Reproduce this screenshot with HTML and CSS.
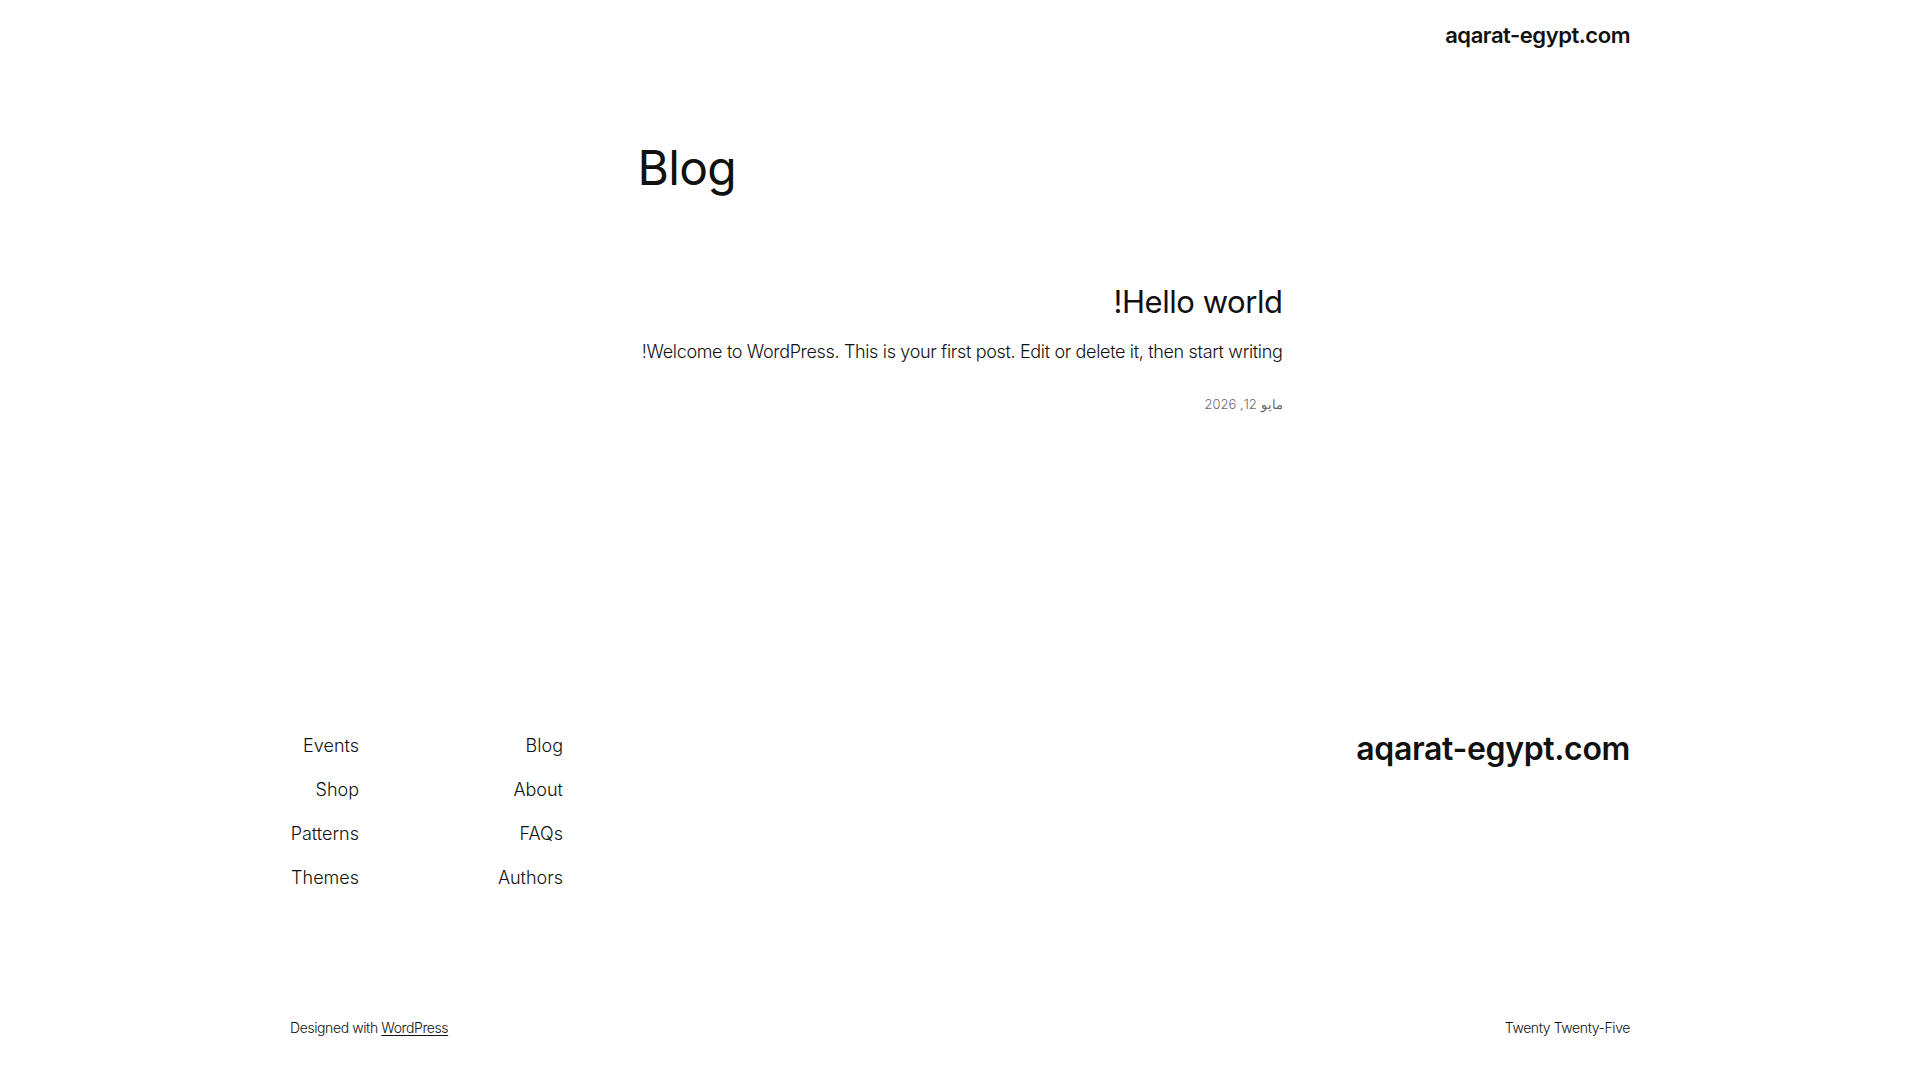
FILE: index.html
```html
<!DOCTYPE html>
<html lang="ar" dir="rtl">
<head>
<meta charset="utf-8">
<title>Blog – aqarat-egypt.com</title>
<link rel="stylesheet" href="styles.css">
</head>
<body>
<header class="site-header">
  <div class="wide">
    <a class="site-title" href="#">aqarat-egypt.com</a>
  </div>
</header>
<main class="content">
  <h1 class="page-title">Blog</h1>
  <article class="post">
    <h2 class="post-title"><a href="#">Hello world!</a></h2>
    <p class="excerpt">Welcome to WordPress. This is your first post. Edit or delete it, then start writing!</p>
    <div class="post-date">مايو 12, 2026</div>
  </article>
</main>
<footer class="site-footer">
  <div class="wide footer-top">
    <a class="footer-title" href="#">aqarat-egypt.com</a>
    <nav class="footer-nav">
      <ul class="nav-col col-1">
        <li><a href="#">Blog</a></li>
        <li><a href="#">About</a></li>
        <li><a href="#">FAQs</a></li>
        <li><a href="#">Authors</a></li>
      </ul>
      <ul class="nav-col col-2">
        <li><a href="#">Events</a></li>
        <li><a href="#">Shop</a></li>
        <li><a href="#">Patterns</a></li>
        <li><a href="#">Themes</a></li>
      </ul>
    </nav>
  </div>
  <div class="wide footer-bottom">
    <p class="theme-name">Twenty Twenty-Five</p>
    <p class="credit">Designed with <a href="#">WordPress</a></p>
  </div>
</footer>
</body>
</html>
```
FILE: styles.css
```css
* { box-sizing: border-box; }
html, body { margin: 0; padding: 0; }
body {
  font-family: Inter, "Noto Sans", "Noto Sans CJK SC", sans-serif;
  font-weight: 300;
  color: #111111;
  background: #ffffff;
}
a { color: inherit; text-decoration: none; }
ul { list-style: none; margin: 0; padding: 0; }
p, h1, h2 { margin: 0; }

.wide {
  width: 1340px;
  margin: 0 auto;
}

.site-header { padding-top: 20px; }
.site-title {
  display: block;
  font-size: 22px;
  line-height: 1.4;
  font-weight: 600;
  letter-spacing: -0.45px;
}

.content {
  width: 645px;
  margin: 88px auto 0;
}
.page-title {
  font-size: 48px;
  line-height: 1.2;
  font-weight: 400;
  letter-spacing: -0.7px;
  text-align: left;
}
.post { margin-top: 87px; }
.post-title {
  font-size: 31px;
  line-height: 1.2;
  font-weight: 400;
  letter-spacing: -0.45px;
}
.excerpt {
  margin-top: 17.5px;
  font-size: 18px;
  line-height: 1.6;
  letter-spacing: -0.34px;
}
.post-date {
  margin-top: 27px;
  font-size: 13px;
  line-height: 1.6;
  color: #686868;
}

.site-footer { margin-top: 315px; padding-bottom: 41px; }
.footer-top {
  display: flex;
  justify-content: space-between;
  align-items: flex-start;
}
.footer-title {
  font-size: 32px;
  line-height: 1.2;
  font-weight: 600;
  letter-spacing: -0.35px;
  margin-top: 0;
}
.footer-nav {
  display: flex;
  width: 273px;
  margin-top: 2px;
}
.nav-col {
  display: flex;
  flex-direction: column;
  gap: 15.2px;
  font-size: 18px;
  line-height: 1.6;
}
.col-1 { width: 204px; }
.col-2 { flex: 1; }

.footer-bottom {
  margin-top: 125px;
  display: flex;
  justify-content: space-between;
  font-size: 14px;
  line-height: 1.6;
  letter-spacing: -0.4px;
}
.credit a {
  text-decoration: underline;
  text-underline-offset: 2px;
  text-decoration-thickness: 1px;
}
```
